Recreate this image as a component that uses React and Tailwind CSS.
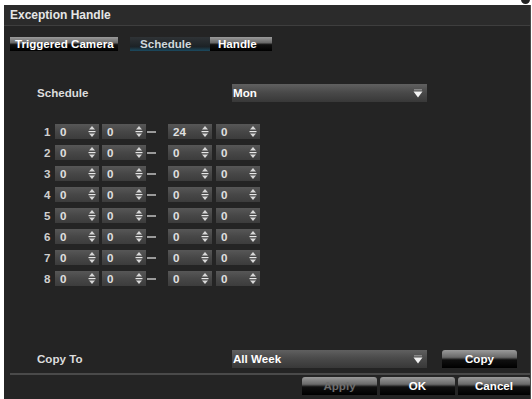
import React from 'react';

const glossy =
  'bg-[linear-gradient(to_bottom,#9a9a9a_0%,#6a6a6a_40%,#101010_55%,#000_100%)]';

function Spinner() {
  return (
    <svg width="8" height="13" viewBox="0 0 8 13" className="shrink-0">
      <path d="M4 1 L7 4.5 L1 4.5 Z" fill="#d8d8d8" />
      <rect x="0.5" y="6" width="7" height="1.2" fill="#e8e8e8" />
      <path d="M1 8.5 L7 8.5 L4 12 Z" fill="#d8d8d8" />
    </svg>
  );
}

function TimeField({ value }) {
  return (
    <div className="w-[44px] h-[15px] flex items-center justify-between pl-[5px] pr-[3px] bg-[linear-gradient(to_bottom,#575757,#474747_50%,#3c3c3c)] text-[#e0e0e0]">
      <span>{value}</span>
      <Spinner />
    </div>
  );
}

function Select({ value }) {
  return (
    <div className="w-[195px] h-[18px] flex items-center justify-between pl-[1px] pr-[4px] bg-[linear-gradient(to_bottom,#606060,#4a4a4a_45%,#383838)] text-white">
      <span>{value}</span>
      <svg width="10" height="9" viewBox="0 0 10 9">
        <rect x="1" y="0" width="8" height="1.5" fill="#888" />
        <path d="M0.5 2.5 L9.5 2.5 L5 8.5 Z" fill="#f2f2f2" />
      </svg>
    </div>
  );
}

function Button({ label, width, disabled }) {
  return (
    <div
      className={`${glossy} h-[18px] rounded-t-[3px] flex items-center justify-center ${
        disabled ? 'text-[#6d6d6d]' : 'text-white'
      } ${width}`}
    >
      {label}
    </div>
  );
}

const rows = [
  ['0', '0', '24', '0'],
  ['0', '0', '0', '0'],
  ['0', '0', '0', '0'],
  ['0', '0', '0', '0'],
  ['0', '0', '0', '0'],
  ['0', '0', '0', '0'],
  ['0', '0', '0', '0'],
  ['0', '0', '0', '0'],
];

export default function App() {
  return (
    <div className="w-[532px] h-[399px] bg-white pt-[5px] pl-[4px] overflow-hidden relative">
      <div className="absolute right-[2px] top-[-5px] w-[9px] h-[9px] rounded-full bg-[#222]" />
      <div className="w-[527px] h-[394px] bg-[#242424] border-r border-[#4a4a4a] flex flex-col font-['Liberation_Sans',Arial,sans-serif] font-bold text-[11.6px] text-[#dcdcdc]">
        {/* title */}
        <div className="h-[21px] shrink-0 flex items-center pl-[6px] bg-[#2b2b2b] border-b border-[#3e3e3e] text-[#e6e6e6] text-[12px]">
          Exception Handle
        </div>

        {/* tabs */}
        <div className="mt-[11px] h-[14px] flex pl-[6px] shrink-0">
          <div className={`${glossy} w-[108px] flex items-center pl-[5px] text-white`}>
            Triggered Camera
          </div>
          <div className="ml-[12px] w-[80px] flex items-center pl-[10px] bg-[linear-gradient(to_bottom,#2f3336,#1c2226_70%,#1b4a60)] text-[#cfd8dc]">
            Schedule
          </div>
          <div className={`${glossy} w-[62px] flex items-center pl-[8px] text-white`}>
            Handle
          </div>
        </div>

        {/* schedule day */}
        <div className="mt-[33px] flex items-center shrink-0">
          <span className="ml-[33px] w-[195px]">Schedule</span>
          <Select value="Mon" />
        </div>

        {/* time periods */}
        <div className="mt-[19px] flex flex-col shrink-0">
          {rows.map((r, i) => (
            <div key={i} className="h-[21px] flex items-center">
              <span className="ml-[40px] w-[11px] text-[#cfcfcf]">{i + 1}</span>
              <TimeField value={r[0]} />
              <div className="ml-[3px]">
                <TimeField value={r[1]} />
              </div>
              <div className="w-[9px] h-[2px] bg-[#9a9a9a] mx-[1px]" />
              <div className="ml-[11px]">
                <TimeField value={r[2]} />
              </div>
              <div className="ml-[4px]">
                <TimeField value={r[3]} />
              </div>
            </div>
          ))}
        </div>

        <div className="flex-1" />

        {/* copy to */}
        <div className="flex items-center shrink-0">
          <span className="ml-[33px] w-[195px]">Copy To</span>
          <Select value="All Week" />
          <div className="ml-[15px]">
            <Button label="Copy" width="w-[75px]" />
          </div>
        </div>

        <div className="mt-[5px] ml-[6px] h-[2px] bg-[#4a4a4a] shrink-0" />

        {/* dialog buttons */}
        <div className="mt-[2px] mb-[4px] flex justify-end gap-[3px] shrink-0">
          <Button label="Apply" width="w-[75px]" disabled />
          <Button label="OK" width="w-[75px]" />
          <Button label="Cancel" width="w-[72px]" />
        </div>
      </div>
    </div>
  );
}
